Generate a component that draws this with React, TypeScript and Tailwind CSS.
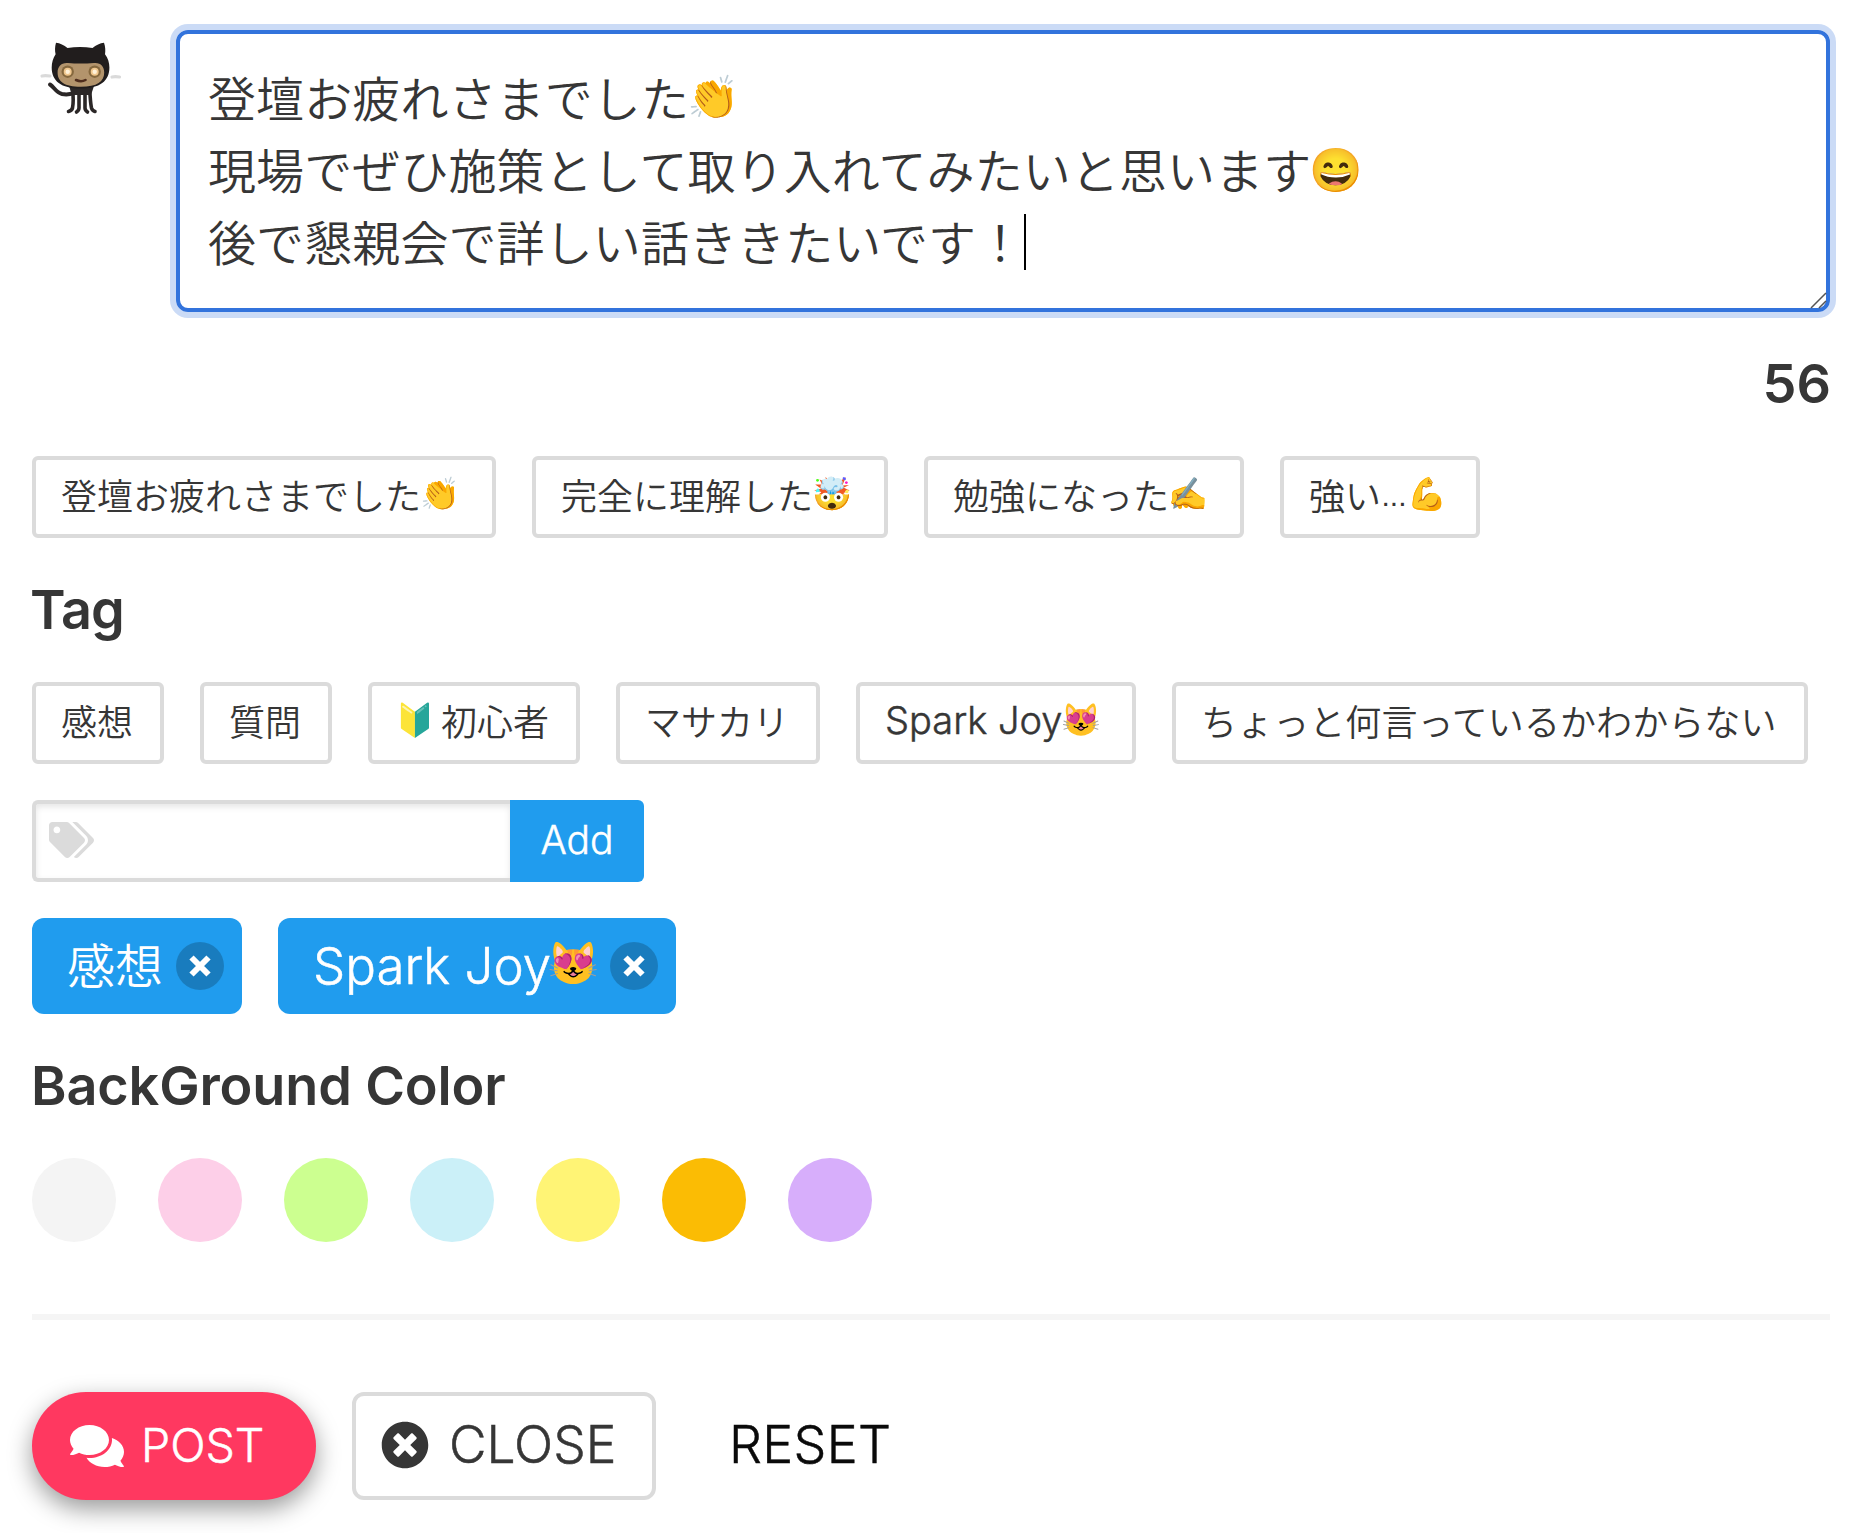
import React from "react";
import { FaComments, FaTags, FaTimesCircle } from "react-icons/fa";

const jp = "font-['Noto_Sans_CJK_JP',sans-serif]";
const latin = "font-['Inter','Noto_Sans_CJK_JP',sans-serif]";
const latinText = "font-['Inter','Noto_Sans_CJK_JP',sans-serif] font-light [-webkit-text-stroke:0.5px_currentColor]";

function Octocat() {
  return (
    <svg width="84" height="84" viewBox="0 0 84 84" fill="none">
      <path d="M4 39c2.500-.6 5-.4 8 0M74 40c2.500-.6 5-.4 7.500 0" stroke="#dadada" strokeWidth="3.200" strokeLinecap="round" />
      <path d="M12 47.500c4 2.500 6 8 12 9.500 4 .8 8 .4 12-.8" stroke="#2b2727" strokeWidth="4" strokeLinecap="round" />
      <path d="M34.500 52c.8 7 .8 15 0 19-.5 2-2 3-4 3.500M41 54v17c0 1.800-1 3-2.500 4M47 54v17c0 1.800 1 3 2.500 4M51.500 52c.8 7 .8 14 2 19 .6 2 1.800 3 3.500 3.500" stroke="#2b2727" strokeWidth="3.600" strokeLinecap="round" />
      <path d="M31 49h25l-3 9H34z" fill="#2b2727" />
      <path d="M18 5.700c4 .3 8 2.500 11.500 5.300 8-1.500 17-1.500 25 0 3.500-2.800 7.500-5 11.500-5.300 1.400 4 1.600 8 1 11.500 3 4 4.400 8.300 4.400 13.300C71.400 44 62 51.500 42.500 51.500S13.700 44 13.700 30.500c0-5 1.400-9.300 3.900-13.300-.8-3.500-.8-7.500.4-11.500z" fill="#211d1d" />
      <path d="M30 26c8 .8 17 .8 26 0 7-.6 10.200 3.800 10.200 9.500 0 9-7 14.300-23.400 14.300S19.600 44.500 19.600 35.500C19.600 29.800 23 25.400 30 26z" fill="#b3946c" />
      <circle cx="29.700" cy="34.700" r="6.200" fill="#75592f" fillOpacity=".75" />
      <circle cx="56.700" cy="34.700" r="6.200" fill="#75592f" fillOpacity=".75" />
      <circle cx="29.700" cy="34.700" r="4" fill="#f0c78e" />
      <circle cx="56.700" cy="34.700" r="4" fill="#f0c78e" />
      <circle cx="29.700" cy="34.700" r="2.200" fill="#fff1d9" />
      <circle cx="56.700" cy="34.700" r="2.200" fill="#fff1d9" />
      <path d="M38 43c3 1.500 7 1.500 9.500 0" stroke="#4e2c1c" strokeWidth="2.600" strokeLinecap="round" />
    </svg>
  );
}

function Chip({ children, w }: { children: React.ReactNode; w: string }) {
  return (
    <button className={`${w} flex h-[82px] shrink-0 items-center whitespace-nowrap rounded-[6px] border-4 border-[#dbdbdb] bg-white pb-[6px] pl-[25px] text-[36px] font-[350] leading-none text-[#363636]`}>
      {children}
    </button>
  );
}

function Emoji({ children, c }: { children: string; c: string }) {
  return <span className={`${c} inline-flex items-center justify-center overflow-visible font-['Noto_Color_Emoji']`}>{children}</span>;
}

function SelectedTag({ children, w }: { children: React.ReactNode; w: string }) {
  return (
    <div className={`${w} flex h-24 items-center justify-between rounded-xl bg-[#209cee] pl-[35px] pr-[18px] text-[48px] font-[350] leading-none text-white`}>
      <span className="flex items-center whitespace-nowrap">{children}</span>
      <button className="flex size-12 items-center justify-center rounded-full bg-black/20">
        <svg width="24" height="24" viewBox="0 0 24 24" stroke="currentColor" strokeWidth="6">
          <path d="M3.500 3.500 20.500 20.500M20.500 3.500 3.500 20.500" />
        </svg>
      </button>
    </div>
  );
}

const colors = ["bg-[#f4f4f4]", "bg-[#fdcfe8]", "bg-[#ccff90]", "bg-[#cbf0f8]", "bg-[#fff475]", "bg-[#fbbc04]", "bg-[#d7aefb]"];

export default function App() {
  return (
    <main lang="ja" className={`${jp} h-[1533px] w-[1853px] overflow-hidden bg-white pl-8 pr-[23px] pt-[30px] text-[#363636]`}>
      <div className="flex">
        <div className="w-36 pl-[6px] pt-[7px]"><Octocat /></div>
        <div className="relative h-[282px] flex-1 rounded-[12px] border-4 border-[#3273dc] pl-[28px] pt-[26px] text-[48px] font-[350] leading-[72px] tracking-[0.1px] shadow-[0_0_0_6px_#cbdbf6]">
          <div className="flex h-[72px] items-center">登壇お疲れさまでした<Emoji c="w-[50px] pt-1 text-[42px]">👏</Emoji></div>
          <div className="flex h-[72px] items-center">現場でぜひ施策として取り入れてみたいと思います<Emoji c="w-[50px] pt-1 text-[43px]">😄</Emoji></div>
          <div className="flex h-[72px] items-center">後で懇親会で詳しい話ききたいです！<span className="mt-1 h-14 w-[2px] bg-black" /></div>
          <svg className="absolute -bottom-px -right-px" width="18" height="18" viewBox="0 0 18 18" stroke="#555" strokeWidth="1.500">
            <path d="M2 17 17 2M10 17l7-7" />
          </svg>
        </div>
      </div>

      <div className={`${latin} -mr-px mt-[36px] flex h-[72px] items-center justify-end text-[54px] font-semibold leading-none`}>56</div>

      <div className="mt-[36px] flex gap-9">
        <Chip w="w-[464px]">登壇お疲れさまでした<Emoji c="w-[38px] text-[32px]">👏</Emoji></Chip>
        <Chip w="w-[356px]">完全に理解した<Emoji c="w-[38px] text-[32px]">🤯</Emoji></Chip>
        <Chip w="w-[320px]">勉強になった<Emoji c="w-[38px] text-[32px]">✍️</Emoji></Chip>
        <Chip w="w-[200px]">強い<span className="w-[26px] pt-[3px] font-['Liberation_Sans'] text-[30px]">...</span><Emoji c="w-[40px] text-[32px]">💪</Emoji></Chip>
      </div>

      <h2 className={`${latin} -ml-[2px] mt-[36px] flex h-[72px] items-center text-[54px] font-semibold leading-none tracking-[-0.8px]`}>Tag</h2>

      <div className="mt-[36px] flex gap-9">
        <Chip w="w-[132px]">感想</Chip>
        <Chip w="w-[132px]">質問</Chip>
        <Chip w="w-[212px]"><Emoji c="w-[44px] pr-[8px] text-[32px]">🔰</Emoji>初心者</Chip>
        <Chip w="w-[204px]">マサカリ</Chip>
        <Chip w="w-[280px]"><span className={`${latinText} text-[38px]`}>Spark Joy</span><Emoji c="w-[38px] text-[32px]">😻</Emoji></Chip>
        <Chip w="w-[636px]"><span className="tracking-[0.08px]">ちょっと何言っているかわからない</span></Chip>
      </div>

      <div className="mt-9 flex">
        <div className="flex h-[82px] w-[478px] items-center rounded-l-[6px] border-4 border-r-0 border-[#dbdbdb] pb-[2px] pl-[13px] text-[#dbdbdb] shadow-[inset_0_3px_6px_rgba(10,10,10,0.1)]">
          <FaTags className="h-9 w-[45px]" />
        </div>
        <button className={`${latinText} h-[82px] w-[134px] rounded-r-[6px] bg-[#209cee] pb-[2px] text-[39px] text-white`}>Add</button>
      </div>

      <div className="mt-9 flex gap-9">
        <SelectedTag w="w-[210px]"><span className="-mt-[6px]">感想</span></SelectedTag>
        <SelectedTag w="w-[398px]"><span className={`${latinText} -mt-[2px] text-[51px]`}>Spark Joy</span><Emoji c="w-[44px] pb-1 text-[42px]">😻</Emoji></SelectedTag>
      </div>

      <h2 className={`${latin} -ml-px mt-9 flex h-[72px] items-center text-[54px] font-semibold leading-none tracking-[-0.15px]`}>BackGround Color</h2>

      <div className="mt-9 flex gap-[42px]">
        {colors.map((c) => <button key={c} className={`${c} size-[84px] rounded-full`} />)}
      </div>

      <div className="mt-[72px] h-[6px] w-[1798px] bg-[#f5f5f5]" />

      <div className={`${latinText} mt-[72px] flex`}>
        <button className="flex h-[108px] w-[284px] items-center rounded-full bg-[#ff3860] pl-[38px] text-[46.5px] text-white shadow-[0_9px_24px_rgba(0,0,0,0.4)]">
          <FaComments className="h-[48px] w-[54px]" />
          <span className="ml-[17px]">POST</span>
        </button>
        <button className="ml-9 flex h-[108px] w-[304px] items-center rounded-xl border-4 border-[#dbdbdb] pb-[2px] pl-[25px] text-[51.5px]">
          <FaTimesCircle size={48} />
          <span className="ml-[20px]">CLOSE</span>
        </button>
        <button className="ml-[73px] pb-[2px] text-[52px] tracking-[0.3px] text-[#0a0a0a]">RESET</button>
      </div>
    </main>
  );
}
